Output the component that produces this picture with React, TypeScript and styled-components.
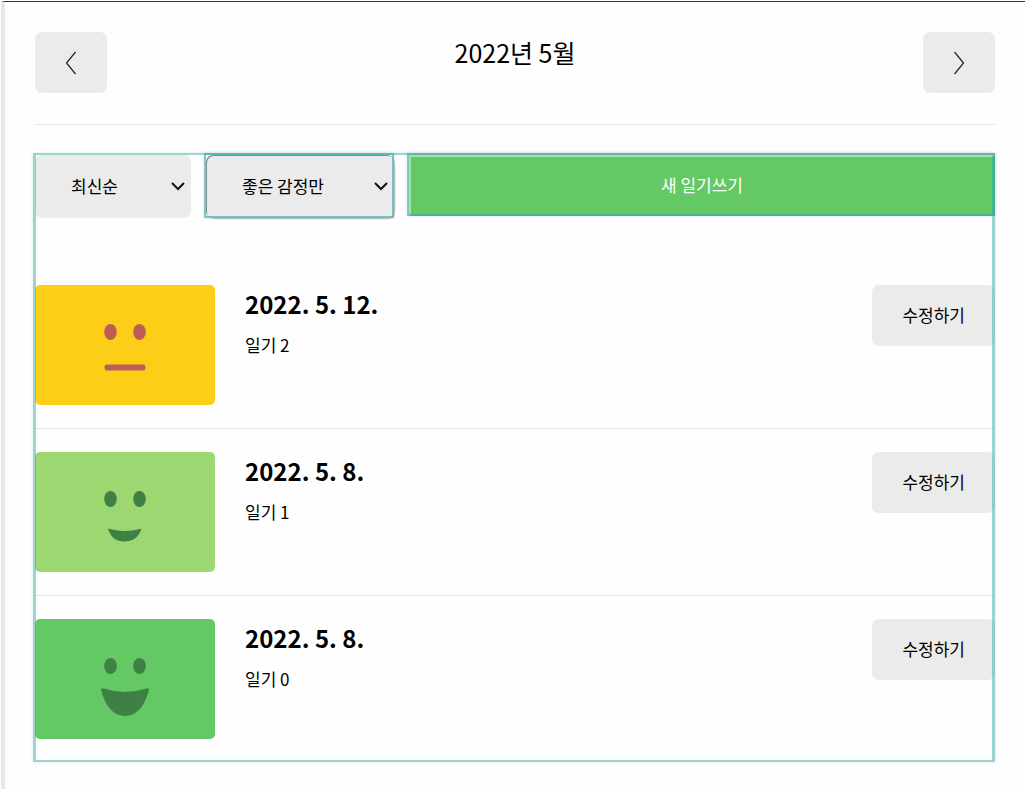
import React from "react";
import styled, { createGlobalStyle } from "styled-components";

const GlobalStyle = createGlobalStyle`
  *, *::before, *::after { box-sizing: border-box; }
  body {
    margin: 0;
    background: #fefefe;
    color: #000;
    font-family: "Noto Sans CJK KR", sans-serif;
  }
  button, select { font: inherit; color: inherit; }
`;

const Page = styled.div`
  margin: 1px 0 0 1px;
  min-height: calc(100vh - 1px);
  padding: 0 30px 27px;
  border-top: 1px solid #333;
  border-left: 4px solid #e8e8e8;
`;

const Header = styled.header`
  display: flex;
  align-items: flex-start;
  justify-content: space-between;
  padding: 30px 0 31px;
  border-bottom: 1px solid #e2e2e2;
`;

const Title = styled.h1`
  margin: 0;
  font-size: 25px;
  font-weight: 400;
  line-height: 40px;
`;

const Button = styled.button`
  height: 61px;
  padding: 0 30px 2px;
  border: 0;
  border-radius: 7px;
  background: #ebebeb;
  font-size: 17px;
  line-height: 24px;
  white-space: nowrap;
  cursor: pointer;
`;

const ArrowButton = styled(Button)`
  display: flex;
  align-items: center;
  justify-content: center;
  width: 72px;
  padding: 1px 0 0;
`;

const Diary = styled.main`
  position: relative;
  margin-top: 30px;
`;

const Outline = styled.span`
  position: absolute;
  inset: -2px 0 0 -2px;
  border: solid rgba(52, 172, 164, 0.5);
  border-width: 2px 3px;
  box-shadow: 0 0 3px rgba(0, 0, 0, 0.12);
  pointer-events: none;
`;

const ControlOutline = styled(Outline)`
  border: 2px solid rgba(52, 172, 164, 0.65);
`;

const Toolbar = styled.div`
  display: flex;
  align-items: flex-start;
  gap: 15px;
`;

const SelectBox = styled.label<{ $width: number }>`
  position: relative;
  flex: none;
  width: ${(p) => p.$width}px;
`;

const Select = styled.select<{ $focused?: boolean }>`
  display: block;
  appearance: none;
  width: 100%;
  height: 63px;
  padding: 0 30px 2px 36px;
  border: 0;
  border-radius: 7px;
  background: #ebebeb;
  box-shadow: ${(p) => (p.$focused ? "inset 1px 1px 0 #888, 1px 1px 1px #bbb" : "none")};
  font-size: 17px;
`;

const SelectArrow = styled.svg`
  position: absolute;
  top: 26px;
  right: 6px;
  pointer-events: none;
`;

const WriteBox = styled.div`
  position: relative;
  flex: 1;
  display: flex;
`;

const WriteButton = styled(Button)`
  flex: 1;
  border-radius: 0;
  background: #64c964;
  color: #fff;
  box-shadow: inset 2px 2px 0 #a5dfa8;
`;

const List = styled.ul`
  margin: 44px 0 0;
  padding: 0;
  list-style: none;
`;

const Item = styled.li`
  display: flex;
  align-items: flex-start;
  padding: 23px 0;
  & + & { border-top: 1px solid #e2e2e2; }
`;

const Face = styled.svg<{ $color: string }>`
  flex: none;
  width: 180px;
  height: 120px;
  border-radius: 5px;
  background: ${(p) => p.$color};
`;

const Info = styled.div`
  flex: 1;
  padding-left: 30px;
`;

const DateText = styled.div`
  font-size: 24px;
  font-weight: 700;
  line-height: 38px;
`;

const Content = styled.p`
  margin: 0;
  font-size: 17px;
  line-height: 44px;
`;

type Mood = "soso" | "good" | "great";

const moods: Record<Mood, { color: string; ink: string; label: string; mouth: string }> = {
  soso: {
    color: "#fdce17",
    ink: "#c05c56",
    label: "그럭저럭",
    mouth: "M71.500 79.500H108.500Q110.500 79.500 110.500 82.500T108.500 85.500H71.500Q69.500 85.500 69.500 82.500T71.500 79.500Z",
  },
  good: {
    color: "#9dd772",
    ink: "#3f8144",
    label: "좋음",
    mouth: "M73 77Q73 76 75 77Q90 81 105 77Q107 76 106 78C103 86 97 89.500 89.500 89.500S76 86 73 77Z",
  },
  great: {
    color: "#64c964",
    ink: "#3f8144",
    label: "아주 좋음",
    mouth: "M66 71Q66 68.500 69 69.500Q90 76.500 111 69.500Q114 68.500 114 71C109 89 101 97 90 97S71 89 66 71Z",
  },
};

const entries: { mood: Mood; date: string; content: string }[] = [
  { mood: "soso", date: "2022. 5. 12.", content: "일기 2" },
  { mood: "good", date: "2022. 5. 8.", content: "일기 1" },
  { mood: "great", date: "2022. 5. 8.", content: "일기 0" },
];

function Chevron({ next }: { next?: boolean }) {
  return (
    <svg width="12" height="24" viewBox="0 0 12 24" fill="none" stroke="#222" strokeWidth="1.2" aria-hidden="true">
      <path d={next ? "M1.500 1L10.500 12L1.500 23" : "M10.500 1L1.500 12L10.500 23"} />
    </svg>
  );
}

function DownArrow() {
  return (
    <SelectArrow width="14" height="10" viewBox="0 0 14 10" fill="none" stroke="#111" strokeWidth="2" aria-hidden="true">
      <path d="M1 2L7 8L13 2" />
    </SelectArrow>
  );
}

export default function App() {
  return (
    <>
      <GlobalStyle />
      <Page>
        <Header>
          <ArrowButton type="button" aria-label="이전 달">
            <Chevron />
          </ArrowButton>
          <Title>2022년 5월</Title>
          <ArrowButton type="button" aria-label="다음 달">
            <Chevron next />
          </ArrowButton>
        </Header>
        <Diary>
          <Toolbar>
            <SelectBox $width={156}>
              <Select aria-label="정렬" defaultValue="latest">
                <option value="latest">최신순</option>
              </Select>
              <DownArrow />
            </SelectBox>
            <SelectBox $width={188}>
              <Select $focused aria-label="감정" defaultValue="good">
                <option value="good">좋은 감정만</option>
              </Select>
              <DownArrow />
              <ControlOutline />
            </SelectBox>
            <WriteBox>
              <WriteButton type="button">새 일기쓰기</WriteButton>
              <ControlOutline />
            </WriteBox>
          </Toolbar>
          <List>
            {entries.map((entry) => {
              const mood = moods[entry.mood];
              return (
                <Item key={entry.content}>
                  <Face $color={mood.color} viewBox="0 0 180 120" fill={mood.ink} role="img" aria-label={mood.label}>
                    <ellipse cx="75.500" cy="47" rx="6.300" ry="8" />
                    <ellipse cx="104.500" cy="47" rx="6.300" ry="8" />
                    <path d={mood.mouth} />
                  </Face>
                  <Info>
                    <DateText>{entry.date}</DateText>
                    <Content>{entry.content}</Content>
                  </Info>
                  <Button type="button">수정하기</Button>
                </Item>
              );
            })}
          </List>
          <Outline />
        </Diary>
      </Page>
    </>
  );
}
